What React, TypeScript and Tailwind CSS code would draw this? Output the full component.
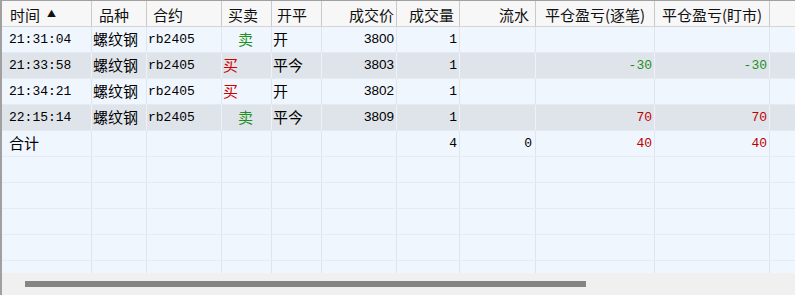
import React from "react";

const cjk = "font-['Noto_Sans_CJK_SC',sans-serif]";
const mono = "font-['Liberation_Mono','Noto_Sans_CJK_SC',monospace]";
const sans = "font-['Liberation_Sans','Noto_Sans_CJK_SC',sans-serif]";

// column widths incl. right grid line
const widths = [
  "w-[90px]",
  "w-[55px]",
  "w-[75px]",
  "w-[50px]",
  "w-[50px]",
  "w-[75px]",
  "w-[63px]",
  "w-[76px]",
  "w-[119px]",
  "w-[115px]",
];

type Trade = {
  time: string;
  side: "买" | "卖";
  offset: string;
  price: string;
  qty: string;
  pnl?: string;
  pnlColor?: string;
};

const trades: Trade[] = [
  { time: "21:31:04", side: "卖", offset: "开", price: "3800", qty: "1" },
  { time: "21:33:58", side: "买", offset: "平今", price: "3803", qty: "1", pnl: "-30", pnlColor: "text-[#1f8f1f]" },
  { time: "21:34:21", side: "买", offset: "开", price: "3802", qty: "1" },
  { time: "22:15:14", side: "卖", offset: "平今", price: "3809", qty: "1", pnl: "70", pnlColor: "text-[#c00000]" },
];

function HeaderRow() {
  const cell = "h-full flex items-center pt-[3px] border-r border-[#c9c9c9] shrink-0";
  return (
    <div className={`flex h-[26px] border-b border-[#d4d4d4] bg-[#f7f7f7] text-[15px] text-[#111] ${cjk}`}>
      <div className={`${widths[0]} ${cell} pl-[8px] gap-[7px]`}>
        时间<span className="text-[9px] leading-none mb-[3px]">▲</span>
      </div>
      <div className={`${widths[1]} ${cell} pl-[7px]`}>品种</div>
      <div className={`${widths[2]} ${cell} pl-[6px]`}>合约</div>
      <div className={`${widths[3]} ${cell} pl-[6px]`}>买卖</div>
      <div className={`${widths[4]} ${cell} pl-[5px]`}>开平</div>
      <div className={`${widths[5]} ${cell} justify-end pr-[2px]`}>成交价</div>
      <div className={`${widths[6]} ${cell} justify-end pr-[5px]`}>成交量</div>
      <div className={`${widths[7]} ${cell} justify-end pr-[6px]`}>流水</div>
      <div className={`${widths[8]} ${cell} justify-center`}>平仓盈亏(逐笔)</div>
      <div className={`${widths[9]} ${cell} justify-center`}>平仓盈亏(盯市)</div>
      <div className="flex-1" />
    </div>
  );
}

function Row({ cells, alt }: { cells: React.ReactNode[]; alt?: boolean }) {
  const line = alt ? "border-[#eef2f7]" : "border-[#dfe5ec]";
  return (
    <div className={`flex h-[26px] border-b border-[#e6ebf1] ${alt ? "bg-[#dfe4ea]" : "bg-[#f0f6fe]"}`}>
      {widths.map((w, i) => (
        <div key={i} className={`${w} shrink-0 h-full flex items-center border-r ${line}`}>
          {cells[i]}
        </div>
      ))}
      <div className="flex-1" />
    </div>
  );
}

function rowCells(t: Trade): React.ReactNode[] {
  return [
    <span className={`pl-[7px] text-[13px] ${mono}`}>{t.time}</span>,
    <span className={`pl-[1px] text-[15px] ${cjk}`}>螺纹钢</span>,
    <span className={`pl-[1px] text-[13px] ${mono}`}>rb2405</span>,
    t.side === "买" ? (
      <span className={`pl-[1px] text-[15px] text-[#d00000] ${cjk}`}>买</span>
    ) : (
      <span className={`pl-[16px] text-[15px] text-[#1f8f1f] ${cjk}`}>卖</span>
    ),
    <span className={`pl-[1px] text-[15px] ${cjk}`}>{t.offset}</span>,
    <span className={`ml-auto pr-[2px] text-[13.5px] ${sans}`}>{t.price}</span>,
    <span className={`ml-auto pr-[2px] text-[13px] ${mono}`}>{t.qty}</span>,
    null,
    t.pnl ? <span className={`ml-auto pr-[2px] text-[13px] ${mono} ${t.pnlColor}`}>{t.pnl}</span> : null,
    t.pnl ? <span className={`ml-auto pr-[2px] text-[13px] ${mono} ${t.pnlColor}`}>{t.pnl}</span> : null,
  ];
}

export default function App() {
  const totals: React.ReactNode[] = [
    <span className={`pl-[7px] text-[15px] ${cjk}`}>合计</span>,
    null,
    null,
    null,
    null,
    null,
    <span className={`ml-auto pr-[2px] text-[13px] ${mono}`}>4</span>,
    <span className={`ml-auto pr-[3px] text-[13px] ${mono}`}>0</span>,
    <span className={`ml-auto pr-[2px] text-[13px] ${mono} text-[#c00000]`}>40</span>,
    <span className={`ml-auto pr-[2px] text-[13px] ${mono} text-[#c00000]`}>40</span>,
  ];

  return (
    <div className="w-[795px] h-[295px] bg-white border-t border-l-2 border-[#a0a0a0] flex flex-col overflow-hidden text-black">
      <HeaderRow />
      <div className="h-[246px] overflow-hidden bg-[#f0f6fe]">
        {trades.map((t, i) => (
          <Row key={i} cells={rowCells(t)} alt={i % 2 === 1} />
        ))}
        <Row cells={totals} />
        {Array.from({ length: 5 }).map((_, i) => (
          <Row key={`e${i}`} cells={[]} />
        ))}
      </div>
      {/* horizontal scrollbar */}
      <div className="flex-1 bg-[#f0f0f0] pt-[8px] pl-[23px]">
        <div className="w-[561px] h-[6px] bg-[#858585]" />
      </div>
    </div>
  );
}
